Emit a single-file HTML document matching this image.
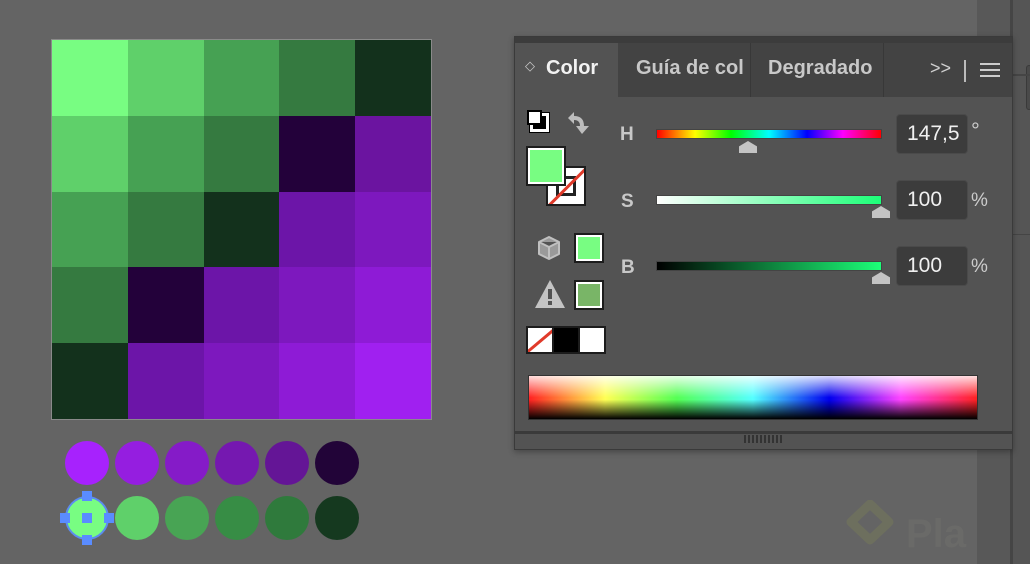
<!DOCTYPE html>
<html><head><meta charset="utf-8"><style>
*{margin:0;padding:0;box-sizing:border-box}
body{width:1030px;height:564px;background:#646464;position:relative;overflow:hidden;font-family:"Liberation Sans",sans-serif}
.a{position:absolute}
.g{left:51px;top:39px;width:381px;height:381px;border:1px solid #8a8a8a;display:grid;grid-template-columns:repeat(5,1fr);grid-template-rows:repeat(5,1fr)}
.c{position:absolute;width:44px;height:44px;border-radius:50%}
.t{color:#c8c8c8;font-weight:bold;font-size:20px}
.lbl{color:#c8c8c8;font-size:19px;font-weight:bold}
.inp{background:#3c3c3c;border:1px solid #4a4a4a;border-radius:4px;color:#f0f0f0;font-size:21px;width:72px;height:40px;padding:7px 0 0 10px}
.knob{position:absolute;width:18px;height:12px;background:#c4c4c4;clip-path:polygon(50% 0,100% 45%,100% 100%,0 100%,0 45%)}
.sw{position:absolute;border:2px solid #1c1c1c;box-shadow:inset 0 0 0 2px #fff}
</style></head><body>
<div class="a g">
<div style="background:#78fd82"></div><div style="background:#5fd06a"></div><div style="background:#46a153"></div><div style="background:#357a40"></div><div style="background:#13311c"></div>
<div style="background:#5fd06a"></div><div style="background:#46a153"></div><div style="background:#357a40"></div><div style="background:#23013a"></div><div style="background:#6b14a0"></div>
<div style="background:#46a153"></div><div style="background:#357a40"></div><div style="background:#13311c"></div><div style="background:#6c15a8"></div><div style="background:#7d18be"></div>
<div style="background:#357a40"></div><div style="background:#23013a"></div><div style="background:#6c15a8"></div><div style="background:#7d18be"></div><div style="background:#8e1bd6"></div>
<div style="background:#13311c"></div><div style="background:#6c15a8"></div><div style="background:#7d18be"></div><div style="background:#8e1bd6"></div><div style="background:#a020f0"></div>
</div>
<div class="c" style="left:65px;top:441px;background:#a722fd"></div>
<div class="c" style="left:115px;top:441px;background:#951ee0"></div>
<div class="c" style="left:165px;top:441px;background:#851bc8"></div>
<div class="c" style="left:215px;top:441px;background:#7518b0"></div>
<div class="c" style="left:265px;top:441px;background:#641596"></div>
<div class="c" style="left:315px;top:441px;background:#220438"></div>
<div class="c" style="left:65px;top:496px;background:#78fd82;border:2px solid #5b8cf0"></div>
<div class="c" style="left:115px;top:496px;background:#5fd06a"></div>
<div class="c" style="left:165px;top:496px;background:#48a454"></div>
<div class="c" style="left:215px;top:496px;background:#378d45"></div>
<div class="c" style="left:265px;top:496px;background:#2f7a3c"></div>
<div class="c" style="left:315px;top:496px;background:#15391f"></div>
<div class="a" style="left:82px;top:491px;width:10px;height:10px;background:#5a8cff"></div>
<div class="a" style="left:82px;top:513px;width:10px;height:10px;background:#5a8cff"></div>
<div class="a" style="left:82px;top:535px;width:10px;height:10px;background:#5a8cff"></div>
<div class="a" style="left:60px;top:513px;width:10px;height:10px;background:#5a8cff"></div>
<div class="a" style="left:104px;top:513px;width:10px;height:10px;background:#5a8cff"></div>

<div class="a" style="left:977px;top:0;width:33px;height:564px;background:#585858"></div>
<div class="a" style="left:1010px;top:0;width:3px;height:564px;background:#454545"></div>
<div class="a" style="left:1013px;top:0;width:17px;height:564px;background:#555"></div>
<div class="a" style="left:1026px;top:65px;width:6px;height:45px;border:1px solid #3a3a3a;border-radius:4px;background:#4a4a4a"></div>
<div class="a" style="left:1013px;top:74px;width:17px;height:2px;background:#454545"></div>
<div class="a" style="left:1013px;top:234px;width:17px;height:1px;background:#454545"></div>

<svg class="a" style="left:845px;top:500px" width="50" height="64" viewBox="0 0 50 64"><path d="M25 4 L44 22 L25 40 L6 22 Z" fill="none" stroke="#6d6f5e" stroke-width="9" stroke-linejoin="round"/></svg>
<div class="a" style="left:906px;top:512px;color:#6a6a68;font-size:40px;font-weight:bold">Pla</div>

<div class="a" style="left:514px;top:36px;width:499px;height:414px;background:#535353;border:1px solid #3a3a3a;box-shadow:0 2px 6px rgba(0,0,0,.3)"></div>
<div class="a" style="left:515px;top:37px;width:497px;height:6px;background:#3c3c3c"></div>
<div class="a" style="left:515px;top:43px;width:497px;height:54px;background:#434343"></div>
<div class="a" style="left:515px;top:43px;width:103px;height:55px;background:#535353"></div>
<div class="a" style="left:750px;top:43px;width:1px;height:54px;background:#383838"></div>
<div class="a" style="left:883px;top:43px;width:1px;height:54px;background:#383838"></div>
<div class="a" style="left:525px;top:58px;color:#c8c8c8;font-size:13px">◇</div>
<div class="a t" style="left:546px;top:57px;color:#f2f2f2">Color</div>
<div class="a t" style="left:636px;top:57px">Guía de col</div>
<div class="a t" style="left:768px;top:57px">Degradado</div>
<div class="a" style="left:930px;top:58px;color:#d0d0d0;font-size:18px">&gt;&gt;</div>
<div class="a" style="left:964px;top:60px;width:2px;height:22px;background:#bbb"></div>
<div class="a" style="left:980px;top:63px;width:20px;height:2px;background:#ccc;box-shadow:0 6px 0 #ccc,0 12px 0 #ccc"></div>

<div class="a" style="left:530px;top:113px;width:19px;height:19px;background:#000;border:3px solid #fff;outline:1px solid #000"></div>
<div class="a" style="left:527px;top:110px;width:15px;height:15px;background:#fff;border:2px solid #000"></div>
<svg class="a" style="left:566px;top:110px" width="26" height="26" viewBox="0 0 26 26"><path d="M2 8 L8 2 L8 6 Q18 6 18 16 L23 16 L16 24 L10 16 L14 16 Q14 10 8 10 L8 14 Z" fill="#bdbdbd"/></svg>
<div class="a" style="left:546px;top:166px;width:40px;height:40px;background:#fff;border:2px solid #1c1c1c;overflow:hidden"><div style="position:absolute;left:8px;top:8px;width:20px;height:20px;border:3px solid #222"></div><div style="position:absolute;left:-8px;top:17px;width:56px;height:3px;background:#e03a2a;transform:rotate(-45deg)"></div></div>
<div class="a" style="left:526px;top:146px;width:40px;height:40px;background:#78fd82;border:2px solid #1c1c1c;box-shadow:inset 0 0 0 2px #fff"></div>
<svg class="a" style="left:537px;top:235px" width="24" height="26" viewBox="0 0 24 26"><path d="M12 2 L22 7 L22 19 L12 24 L2 19 L2 7 Z M2 7 L12 12 L22 7 M12 12 L12 24" fill="#9a9a9a" stroke="#c0c0c0" stroke-width="2" stroke-linejoin="round"/></svg>
<div class="sw" style="left:574px;top:233px;width:30px;height:30px;background:#78fd82"></div>
<svg class="a" style="left:534px;top:279px" width="32" height="30" viewBox="0 0 32 30"><path d="M16 1 L31 29 L1 29 Z" fill="#c4c4c4"/><rect x="14" y="10" width="4" height="10" fill="#535353"/><rect x="14" y="22" width="4" height="4" fill="#535353"/></svg>
<div class="sw" style="left:574px;top:280px;width:30px;height:30px;background:#79b567"></div>
<div class="a" style="left:526px;top:326px;width:80px;height:28px;background:#1c1c1c;padding:2px;display:flex;gap:2px">
<div style="flex:1;background:#fff;position:relative;overflow:hidden"><div style="position:absolute;left:-6px;top:11px;width:38px;height:3px;background:#e03a2a;transform:rotate(-40deg)"></div></div>
<div style="flex:1;background:#000"></div><div style="flex:1;background:#fff"></div></div>

<div class="a lbl" style="left:620px;top:124px">H</div>
<div class="a lbl" style="left:621px;top:191px">S</div>
<div class="a lbl" style="left:621px;top:257px">B</div>
<div class="a" style="left:656px;top:129px;width:226px;height:10px;border:1px solid #444;background:linear-gradient(90deg,#f00,#ff0 17%,#0f0 33%,#0ff 50%,#00f 67%,#f0f 83%,#f00)"></div>
<div class="a" style="left:656px;top:195px;width:226px;height:10px;border:1px solid #444;background:linear-gradient(90deg,#fff,#1cff78)"></div>
<div class="a" style="left:656px;top:261px;width:226px;height:10px;border:1px solid #444;background:linear-gradient(90deg,#000,#1cff78)"></div>
<div class="knob" style="left:739px;top:141px"></div>
<div class="knob" style="left:872px;top:206px"></div>
<div class="knob" style="left:872px;top:272px"></div>
<div class="a inp" style="left:896px;top:114px">147,5</div>
<div class="a inp" style="left:896px;top:180px">100</div>
<div class="a inp" style="left:896px;top:246px">100</div>
<div class="a" style="left:971px;top:118px;color:#ccc;font-size:22px">°</div>
<div class="a" style="left:971px;top:190px;color:#ccc;font-size:19px">%</div>
<div class="a" style="left:971px;top:256px;color:#ccc;font-size:19px">%</div>

<div class="a" style="left:528px;top:375px;width:450px;height:45px;border:1px solid #333;background:linear-gradient(180deg,rgba(255,255,255,.85),rgba(255,255,255,0) 50%,rgba(0,0,0,0) 55%,#000),linear-gradient(90deg,#f22,#ff5 17%,#5f5 33%,#5ff 50%,#00e 67%,#f4f 83%,#f22)"></div>
<div class="a" style="left:515px;top:431px;width:497px;height:3px;background:#3a3a3a"></div>
<div class="a" style="left:744px;top:435px;width:38px;height:8px;background:repeating-linear-gradient(90deg,#333 0 2px,transparent 2px 4px)"></div>
</body></html>
